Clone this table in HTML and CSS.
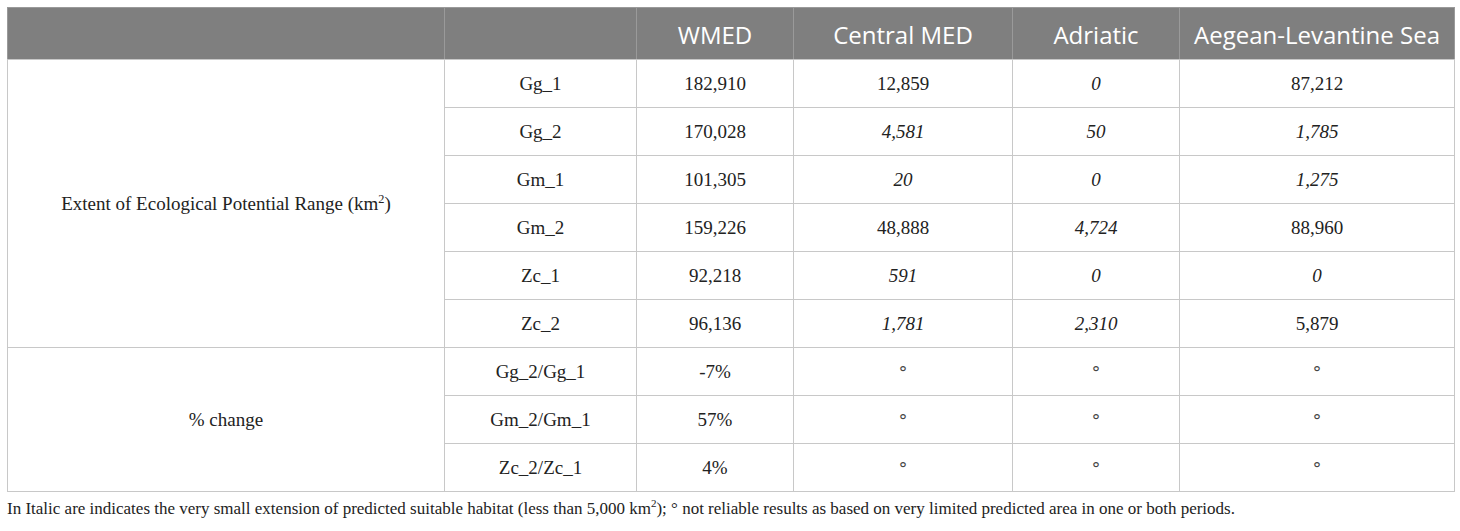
FILE: index.html
```html
<!DOCTYPE html>
<html lang="en">
<head>
    <meta charset="UTF-8">
    <title>Ecological Potential Range</title>
    <link rel="stylesheet" href="styles.css">
</head>
<body>
    <table class="range-table">
        <colgroup>
            <col class="col-label">
            <col class="col-model">
            <col class="col-wmed">
            <col class="col-central">
            <col class="col-adriatic">
            <col class="col-aegean">
        </colgroup>
        <thead>
            <tr>
                <th></th>
                <th></th>
                <th>WMED</th>
                <th>Central MED</th>
                <th>Adriatic</th>
                <th>Aegean-Levantine Sea</th>
            </tr>
        </thead>
        <tbody>
            <tr>
                <td rowspan="6">Extent of Ecological Potential Range (km<sup>2</sup>)</td>
                <td>Gg_1</td>
                <td>182,910</td>
                <td>12,859</td>
                <td class="small">0</td>
                <td>87,212</td>
            </tr>
            <tr>
                <td>Gg_2</td>
                <td>170,028</td>
                <td class="small">4,581</td>
                <td class="small">50</td>
                <td class="small">1,785</td>
            </tr>
            <tr>
                <td>Gm_1</td>
                <td>101,305</td>
                <td class="small">20</td>
                <td class="small">0</td>
                <td class="small">1,275</td>
            </tr>
            <tr>
                <td>Gm_2</td>
                <td>159,226</td>
                <td>48,888</td>
                <td class="small">4,724</td>
                <td>88,960</td>
            </tr>
            <tr>
                <td>Zc_1</td>
                <td>92,218</td>
                <td class="small">591</td>
                <td class="small">0</td>
                <td class="small">0</td>
            </tr>
            <tr>
                <td>Zc_2</td>
                <td>96,136</td>
                <td class="small">1,781</td>
                <td class="small">2,310</td>
                <td>5,879</td>
            </tr>
            <tr>
                <td rowspan="3">% change</td>
                <td>Gg_2/Gg_1</td>
                <td>-7%</td>
                <td class="na">&deg;</td>
                <td class="na">&deg;</td>
                <td class="na">&deg;</td>
            </tr>
            <tr>
                <td>Gm_2/Gm_1</td>
                <td>57%</td>
                <td class="na">&deg;</td>
                <td class="na">&deg;</td>
                <td class="na">&deg;</td>
            </tr>
            <tr>
                <td>Zc_2/Zc_1</td>
                <td>4%</td>
                <td class="na">&deg;</td>
                <td class="na">&deg;</td>
                <td class="na">&deg;</td>
            </tr>
        </tbody>
    </table>

    <p class="footnote">In Italic are indicates the very small extension of predicted suitable habitat (less than 5,000 km<sup>2</sup>); &deg; not reliable results as based on very limited predicted area in one or both periods.</p>
</body>
</html>
```

FILE: styles.css
```css
* {
    margin: 0;
    padding: 0;
    box-sizing: border-box;
}

body {
    font-family: 'Liberation Serif', serif;
    background-color: #fff;
    color: #222;
    padding: 7px;
}

.range-table {
    width: 1447px;
    border-collapse: collapse;
    table-layout: fixed;
    border: 1px solid #c8c8c8;
}

.col-label { width: 437px; }
.col-model { width: 192px; }
.col-wmed { width: 157px; }
.col-central { width: 219px; }
.col-adriatic { width: 167px; }
.col-aegean { width: 275px; }

th {
    height: 52px;
    background-color: #7f7f7f;
    color: #fff;
    font-family: 'Open Sans', sans-serif;
    font-weight: normal;
    font-size: 24px;
    text-align: center;
    padding-top: 2px;
    border: 1px solid #9a9a9a;
    border-bottom-color: #c8c8c8;
}

td {
    height: 48px;
    font-size: 19px;
    text-align: center;
    border: 1px solid #c8c8c8;
}

td.small {
    font-style: italic;
}

td.na {
    font-family: 'DejaVu Sans', sans-serif;
    font-size: 18px;
    vertical-align: top;
    padding-top: 14px;
    color: #444;
}

sup {
    font-size: 0.65em;
    line-height: 0;
}

.footnote {
    margin-top: 7px;
    font-size: 17px;
}
```
